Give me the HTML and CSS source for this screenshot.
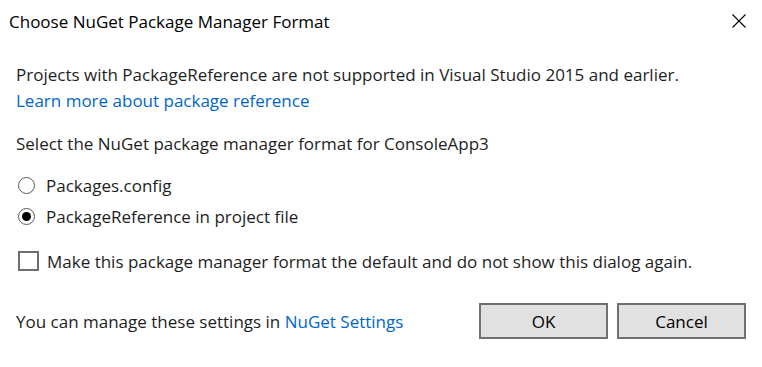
FILE: index.html
```html
<!DOCTYPE html>
<html lang="en">

<head>
    <meta charset="UTF-8">
    <title>Choose NuGet Package Manager Format</title>
    <link rel="stylesheet" href="styles.css">
</head>

<body>
    <div class="dialog">
        <div class="titlebar">
            <span class="title">Choose NuGet Package Manager Format</span>
            <svg class="close" width="16" height="16" viewBox="0 0 16 16">
                <path d="M1.5 1.5 L14.5 14.5 M14.5 1.5 L1.5 14.5" stroke="#000" stroke-width="1.1" fill="none" />
            </svg>
        </div>

        <div class="content">
            <p class="line first">Projects with PackageReference are not supported in Visual Studio 2015 and earlier.</p>
            <p class="line"><a href="#">Learn more about package reference</a></p>

            <p class="line select">Select the NuGet package manager format for ConsoleApp3</p>

            <div class="option first-option">
                <span class="radio"></span>
                <span>Packages.config</span>
            </div>
            <div class="option">
                <span class="radio checked"></span>
                <span>PackageReference in project file</span>
            </div>

            <div class="option check-row">
                <span class="checkbox"></span>
                <span>Make this package manager format the default and do not show this dialog again.</span>
            </div>

            <div class="footer">
                <span>You can manage these settings in <a href="#">NuGet Settings</a></span>
                <div class="buttons">
                    <button>OK</button>
                    <button>Cancel</button>
                </div>
            </div>
        </div>
    </div>
</body>

</html>
```

FILE: styles.css
```css
* {
    box-sizing: border-box;
    margin: 0;
    padding: 0;
    font-family: "Open Sans", "Noto Sans", sans-serif;
}

body {
    background-color: #fff;
    color: #1e1e1e;
    font-size: 17px;
    width: 762px;
    height: 367px;
}

a {
    color: #0066cc;
    text-decoration: none;
}

.titlebar {
    height: 42px;
    display: flex;
    align-items: center;
    justify-content: space-between;
    padding: 0 15px 0 9px;
}

.title {
    color: #000;
    font-size: 17px;
}

.close {
    display: block;
}

.content {
    padding: 0 16px;
}

.line {
    line-height: 20px;
    margin-top: 6px;
}

.line.first {
    margin-top: 23px;
}

.line.select {
    margin-top: 23px;
}

.option {
    display: flex;
    align-items: center;
    height: 20px;
    margin-top: 11px;
}

.option.first-option {
    margin-top: 21px;
}

.radio {
    width: 17px;
    height: 17px;
    border: 1.5px solid #5a5a5a;
    border-radius: 50%;
    margin: 0 11px 0 2px;
    display: flex;
    align-items: center;
    justify-content: center;
}

.radio.checked::after {
    content: "";
    width: 9px;
    height: 9px;
    border-radius: 50%;
    background-color: #000;
}

.check-row {
    margin-top: 25px;
}

.checkbox {
    width: 21px;
    height: 20px;
    border: 2px solid #6e6e6e;
    margin: 0 8px 0 2px;
}

.footer {
    display: flex;
    align-items: center;
    justify-content: space-between;
    margin-top: 32px;
}

.buttons {
    display: flex;
    gap: 9px;
}

.buttons button {
    width: 129px;
    height: 36px;
    background-color: #e1e1e1;
    border: 2px solid #707070;
    font-size: 17px;
    color: #000;
}
```
